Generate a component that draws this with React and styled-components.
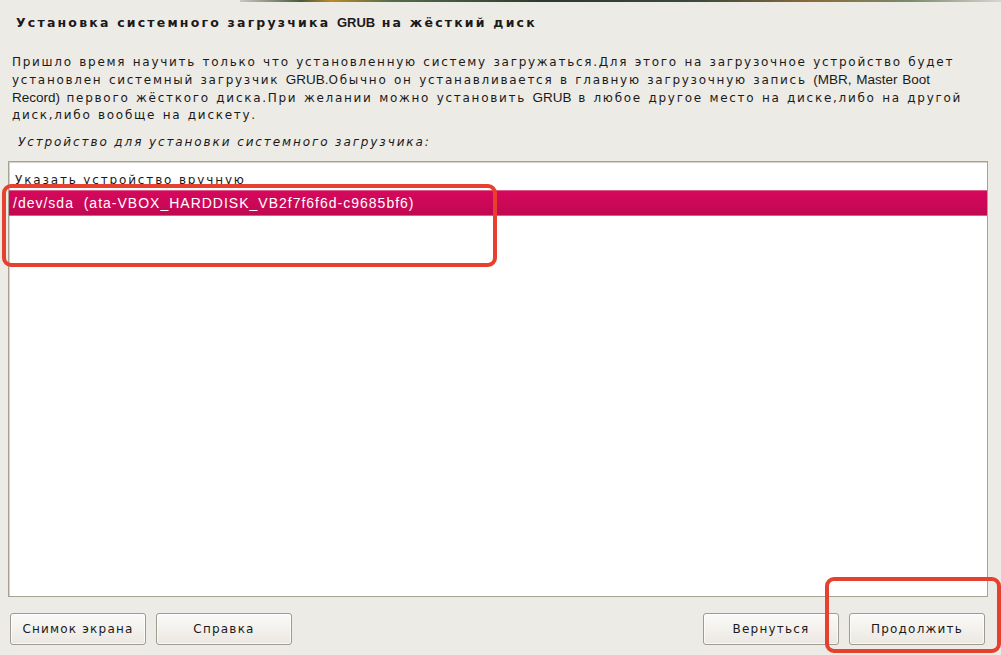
import React from "react";
import styled, { createGlobalStyle } from "styled-components";

const GlobalStyle = createGlobalStyle`
  html, body {
    margin: 0;
    padding: 0;
    background: #edebe6;
  }
  #root {
    width: 1001px;
    height: 655px;
  }
`;

const paragraph = [
  ["Пришло время научить только что установленную систему загружаться.Для этого на загрузочное устройство будет"],
  ["установлен системный загрузчик ", { latin: "GRUB." }, "Обычно он устанавливается в главную загрузочную запись ", { latin: "(MBR, Master Boot" }],
  [{ latin: "Record)" }, " первого жёсткого диска.При желании можно установить ", { latin: "GRUB" }, " в любое другое место на диске,либо на другой"],
  ["диск,либо вообще на дискету."],
];

const devices = [
  { label: "Указать устройство вручную", latin: false },
  { label: "/dev/sda  (ata-VBOX_HARDDISK_VB2f7f6f6d-c9685bf6)", latin: true, selected: true },
];

const App = () => {
  return (
    <Page>
      <GlobalStyle />
      <Banner>
        <BannerGap />
        <BannerImage />
      </Banner>
      <Title>
        Установка системного загрузчика <Latin bold>GRUB</Latin> на жёсткий диск
      </Title>
      <Description>
        {paragraph.map((line, i) => (
          <Line key={i}>
            {line.map((part, j) =>
              typeof part === "string" ? part : <Latin key={j}>{part.latin}</Latin>
            )}
          </Line>
        ))}
      </Description>
      <Question>Устройство для установки системного загрузчика:</Question>
      <ListBox>
        {devices.map(d => (
          <Item key={d.label} selected={d.selected} latin={d.latin}>
            {d.label}
          </Item>
        ))}
      </ListBox>
      <ButtonBar>
        <Button>Снимок экрана</Button>
        <Button>Справка</Button>
        <Spacer />
        <Button>Вернуться</Button>
        <Button>Продолжить</Button>
      </ButtonBar>
      <Mark style={{ left: 2, top: 184, width: 495, height: 83 }} />
      <Mark style={{ left: 825, top: 577, width: 176, height: 76 }} />
    </Page>
  );
};

export default App;

const Page = styled.div`
  position: relative;
  width: 1001px;
  height: 655px;
  overflow: hidden;
  background: #edebe6;
  display: flex;
  flex-direction: column;
  font-family: "DejaVu Sans", sans-serif;
  color: #1a1a1a;
`;

const Banner = styled.div`
  display: flex;
  height: 2px;
`;

const BannerGap = styled.div`
  width: 240px;
`;

const BannerImage = styled.div`
  flex: 1;
  background: linear-gradient(
    90deg,
    #c9c8c0 0%,
    #4a5a3a 8%,
    #b98a2a 12%,
    #556b4a 20%,
    #2d3a2d 40%,
    #3a4a3a 60%,
    #8a6a3a 75%,
    #7a8a6a 88%,
    #d8d6d0 100%
  );
`;

const Title = styled.div`
  margin: 13px 0 0 16px;
  font-size: 12.5px;
  font-weight: bold;
  letter-spacing: 2.2px;
  line-height: 16px;
  white-space: pre;
`;

const Latin = styled.span`
  font-family: "Liberation Sans", sans-serif;
  font-size: ${p => (p.bold ? "13px" : "13.5px")};
  letter-spacing: 0;
`;

const Description = styled.div`
  margin: 23px 0 0 12px;
  font-size: 12px;
  line-height: 17px;
  letter-spacing: 1.72px;
  word-spacing: 1px;
`;

const Line = styled.div`
  white-space: pre;
`;

const Question = styled.div`
  margin: 10px 0 0 18px;
  font-size: 12px;
  font-style: italic;
  letter-spacing: 1.9px;
  line-height: 17px;
`;

const ListBox = styled.div`
  margin: 10px 13px 0 8px;
  height: 426px;
  background: #fff;
  border: 1px solid #a8a294;
  box-shadow: inset 1px 1px 0 #d6d2ca;
  padding-top: 8px;
  display: flex;
  flex-direction: column;
`;

const Item = styled.div`
  height: ${p => (p.selected ? "24px" : "20px")};
  display: flex;
  align-items: center;
  padding-left: ${p => (p.latin ? "4px" : "6px")};
  font-family: ${p => (p.latin ? '"Liberation Sans", sans-serif' : '"DejaVu Sans", sans-serif')};
  font-size: ${p => (p.latin ? "14px" : "12px")};
  letter-spacing: ${p => (p.latin ? "1px" : "1.85px")};
  white-space: pre;
  color: ${p => (p.selected ? "#fff" : "#1a1a1a")};
  background: ${p => (p.selected ? "linear-gradient(#d6085c, #c10852)" : "transparent")};
  border-top: ${p => (p.selected ? "1px solid #e05a8a" : "none")};
  border-bottom: ${p => (p.selected ? "1px solid #e05a8a" : "none")};
`;

const ButtonBar = styled.div`
  display: flex;
  gap: 10px;
  padding: 16px 16px 0 10px;
`;

const Spacer = styled.div`
  flex: 1;
`;

const Button = styled.div`
  width: 134px;
  height: 30px;
  border: 1px solid #a09b90;
  border-radius: 3px;
  background: linear-gradient(#fbfaf8, #ebe8e2);
  box-shadow: inset 0 0 0 1px rgba(255, 255, 255, 0.7);
  display: flex;
  align-items: center;
  justify-content: center;
  font-size: 12px;
  letter-spacing: 1.2px;
  color: #1a1a1a;
  white-space: pre;
`;

const Mark = styled.div`
  position: absolute;
  box-sizing: border-box;
  border: 4px solid #e8402f;
  border-radius: 9px;
  pointer-events: none;
`;
